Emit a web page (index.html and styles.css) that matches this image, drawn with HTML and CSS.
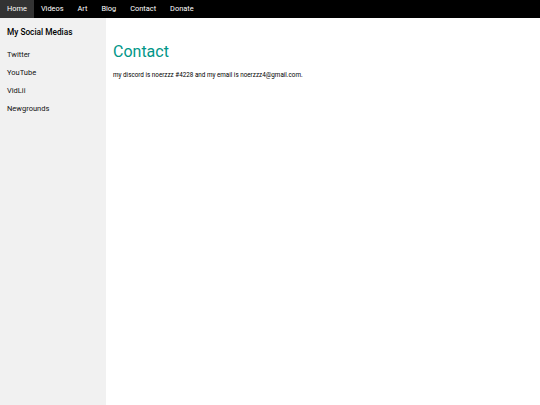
FILE: index.html
```html
<!DOCTYPE html>
<html>
<head>
<meta charset="utf-8">
<link rel="stylesheet" href="styles.css">
</head>
<body>
<nav class="topbar">
  <a class="nav-item active" href="#">Home</a>
  <a class="nav-item" href="#">Videos</a>
  <a class="nav-item" href="#">Art</a>
  <a class="nav-item" href="#">Blog</a>
  <a class="nav-item" href="#">Contact</a>
  <a class="nav-item" href="#">Donate</a>
</nav>
<div class="layout">
  <aside class="sidebar">
    <h4 class="side-title">My Social Medias</h4>
    <a class="side-link" href="#">Twitter</a>
    <a class="side-link" href="#">YouTube</a>
    <a class="side-link" href="#">VidLii</a>
    <a class="side-link" href="#">Newgrounds</a>
  </aside>
  <main class="main">
    <h1 class="title">Contact</h1>
    <p class="text">my discord is noerzzz #4228 and my email is noerzzz4@gmail.com.</p>
  </main>
</div>
</body>
</html>
```

FILE: styles.css
```css
html, body {
  margin: 0;
  padding: 0;
  height: 100%;
}
body {
  font-family: Roboto, "Liberation Sans", sans-serif;
  background: #fff;
  color: #000;
}
.topbar {
  display: flex;
  height: 18px;
  background: #000;
}
.nav-item {
  display: block;
  padding: 0 7px;
  line-height: 18px;
  font-size: 7.4px;
  color: #fff;
  text-decoration: none;
}
.nav-item.active {
  background: #333;
}
.layout {
  display: flex;
  height: calc(100% - 18px);
}
.sidebar {
  width: 106px;
  flex: none;
  background: #f1f1f1;
  display: flex;
  flex-direction: column;
}
.side-title {
  margin: 0;
  padding: 8px 7px 8px;
  font-size: 8.3px;
  font-weight: 500;
  line-height: 12px;
}
.side-link {
  display: block;
  padding: 0 7px;
  line-height: 18px;
  font-size: 7.5px;
  color: #111;
  text-decoration: none;
}
.main {
  flex: 1;
  padding: 0 7px;
}
.title {
  margin: 24px 0 0;
  font-size: 16px;
  font-weight: 400;
  line-height: 20px;
  color: #009688;
}
.text {
  margin: 8px 0 0;
  font-size: 6.3px;
  line-height: 10px;
}
```
